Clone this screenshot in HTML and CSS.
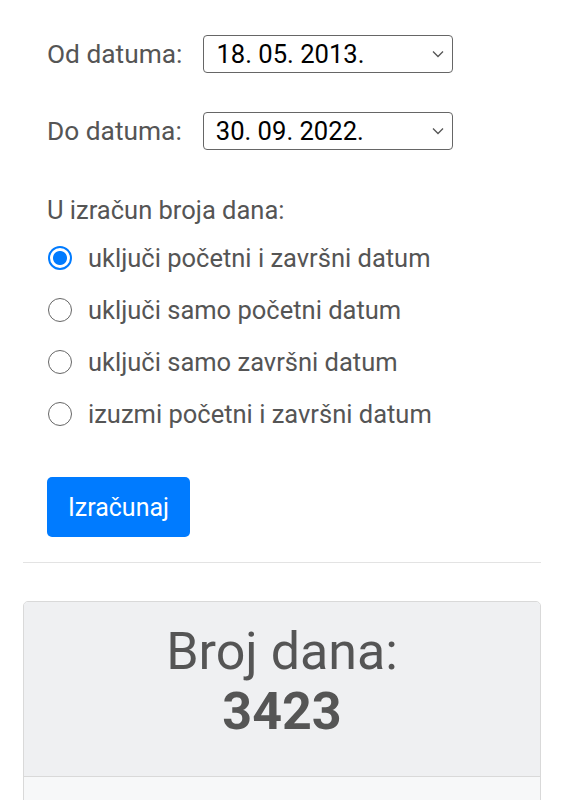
FILE: index.html
```html
<!DOCTYPE html>
<html lang="hr">
<head>
<meta charset="utf-8">
<title>Broj dana</title>
<link rel="stylesheet" href="styles.css">
</head>
<body>
<div class="container">
  <form class="calc">
    <div class="row">
      <label class="lbl" for="od">Od datuma:</label>
      <div class="select-wrap">
        <select id="od" class="date"><option>18. 05. 2013.</option></select>
        <svg class="chev" width="12" height="8" viewBox="0 0 12 8"><path d="M1 1.5 L6 6.5 L11 1.5" fill="none" stroke="#555" stroke-width="1.3"/></svg>
      </div>
    </div>
    <div class="row">
      <label class="lbl" for="do">Do datuma:</label>
      <div class="select-wrap">
        <select id="do" class="date"><option>30. 09. 2022.</option></select>
        <svg class="chev" width="12" height="8" viewBox="0 0 12 8"><path d="M1 1.5 L6 6.5 L11 1.5" fill="none" stroke="#555" stroke-width="1.3"/></svg>
      </div>
    </div>
    <div class="legend">U izračun broja dana:</div>
    <label class="opt"><input type="radio" name="r" checked><span>uključi početni i završni datum</span></label>
    <label class="opt"><input type="radio" name="r"><span>uključi samo početni datum</span></label>
    <label class="opt"><input type="radio" name="r"><span>uključi samo završni datum</span></label>
    <label class="opt"><input type="radio" name="r"><span>izuzmi početni i završni datum</span></label>
    <button type="button" class="btn">Izračunaj</button>
  </form>
  <hr class="sep">
  <div class="card">
    <div class="card-head">
      <div class="title">Broj dana:</div>
      <div class="num">3423</div>
    </div>
    <div class="card-body"></div>
  </div>
</div>
</body>
</html>
```
FILE: styles.css
```css
html, body {
  margin: 0;
  padding: 0;
  background: #fff;
}
body {
  font-family: Roboto, "Liberation Sans", sans-serif;
  color: #555;
}
.container {
  padding: 0 23px;
}
.calc {
  padding: 35px 24px 0;
  display: flex;
  flex-direction: column;
  align-items: flex-start;
}
.row {
  display: flex;
  align-items: center;
  gap: 21px;
  margin-bottom: 39px;
}
.lbl {
  font-size: 26.3px;
  line-height: 38px;
}
.select-wrap {
  position: relative;
  width: 250px;
  height: 38px;
}
.date {
  appearance: none;
  -webkit-appearance: none;
  box-sizing: border-box;
  width: 250px;
  height: 38px;
  margin: 0;
  padding: 0 30px 0 12px;
  border: 1px solid #666;
  border-radius: 4px;
  background: #fff;
  color: #000;
  font-family: Roboto, "Liberation Sans", sans-serif;
  font-size: 25.6px;
  line-height: 36px;
}
.chev {
  position: absolute;
  right: 9px;
  top: 15px;
  pointer-events: none;
}
.legend {
  margin-top: 3px;
  font-size: 25.5px;
  line-height: 36px;
  margin-bottom: 4px;
}
.opt {
  display: flex;
  align-items: center;
  height: 52px;
  font-size: 25.5px;
}
.opt input {
  appearance: none;
  -webkit-appearance: none;
  box-sizing: border-box;
  width: 24px;
  height: 24px;
  margin: 0 16px 0 1px;
  border: 1.5px solid #666;
  border-radius: 50%;
  background: #fff;
  flex: none;
}
.opt input:checked {
  border: 2px solid #007bff;
  background: radial-gradient(circle, #007bff 0 6.5px, #fff 7.5px);
}
.btn {
  margin-top: 37px;
  height: 60px;
  padding: 0 21px;
  border: none;
  border-radius: 5px;
  background: #007bff;
  color: #fff;
  font-family: Roboto, "Liberation Sans", sans-serif;
  font-size: 25px;
}
.sep {
  margin: 25px 0 38px;
  border: 0;
  border-top: 1px solid #e3e3e3;
  height: 0;
}
.card {
  border: 1px solid #d9d9d9;
  border-radius: 5px;
  background: #f7f8f9;
  overflow: hidden;
}
.card-head {
  background: #eff0f2;
  border-bottom: 1px solid #d9d9d9;
  text-align: center;
  padding: 20px 0 34px;
}
.title {
  font-size: 52px;
  line-height: 60px;
}
.num {
  font-size: 52px;
  line-height: 60px;
  font-weight: bold;
}
.card-body {
  height: 60px;
}
```
